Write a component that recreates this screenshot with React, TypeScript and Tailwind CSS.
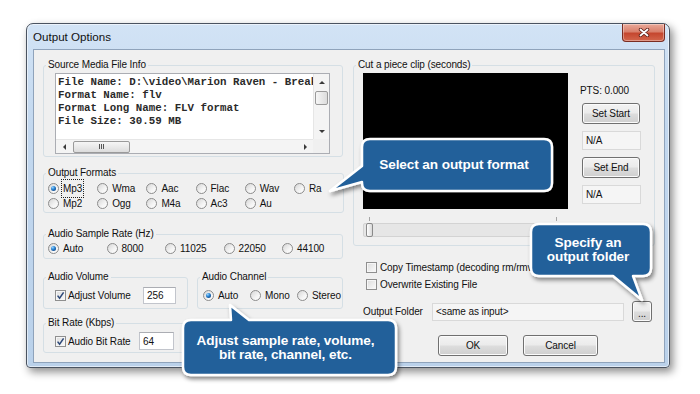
import React from "react";

const FILE_INFO = [
  "File Name: D:\\video\\Marion Raven - Break You.flv",
  "Format Name: flv",
  "Format Long Name: FLV format",
  "File Size: 30.59 MB",
];

const FORMATS = ["Mp3", "Wma", "Aac", "Flac", "Wav", "Ra", "Mp2", "Ogg", "M4a", "Ac3", "Au"];
const RATES = ["Auto", "8000", "11025", "22050", "44100"];

function Radio({ label, checked, focus }: { label: string; checked?: boolean; focus?: boolean }) {
  return (
    <div className="flex items-center gap-[4px] whitespace-nowrap">
      <span className="flex h-[11px] w-[11px] shrink-0 items-center justify-center rounded-full border border-[#8c8c8c] bg-[linear-gradient(135deg,#d6d6d6,#f4f4f4_60%,#ffffff)]">
        {checked && (
          <span className="h-[5px] w-[5px] rounded-full bg-[radial-gradient(circle_at_35%_30%,#9ad6ff_0%,#2b86d6_40%,#0d3f7d_85%)]" />
        )}
      </span>
      <span className={focus ? "outline-1 outline-offset-1 outline-dotted outline-[#222]" : ""}>{label}</span>
    </div>
  );
}

function CheckBox({ checked }: { checked?: boolean }) {
  return (
    <span className="flex h-[11px] w-[11px] shrink-0 items-center justify-center border border-[#8f8f8f] bg-[linear-gradient(135deg,#dcdcdc,#fbfbfb)] shadow-[inset_0_0_0_1px_#f6f6f6]">
      {checked && (
        <svg width="9" height="9" viewBox="0 0 9 9">
          <path d="M1.6 4.6 L3.6 7.2 L7.6 1.4" fill="none" stroke="#2c4778" strokeWidth="1.5" />
        </svg>
      )}
    </span>
  );
}

function Group({ title, className, children }: { title: string; className?: string; children: React.ReactNode }) {
  return (
    <fieldset className={`rounded-[3px] border border-[#d5dfe5] pl-[2px] ${className ?? ""}`}>
      <legend className="px-[2px] leading-[12px]">{title}</legend>
      {children}
    </fieldset>
  );
}

function WinButton({ className, children }: { className: string; children: React.ReactNode }) {
  return (
    <button
      type="button"
      className={`flex items-center justify-center rounded-[3px] border border-[#707070] bg-[linear-gradient(180deg,#f3f3f3_0%,#ebebeb_48%,#dddddd_52%,#cfcfcf_100%)] shadow-[inset_0_0_0_1px_#fbfbfb] ${className}`}
    >
      {children}
    </button>
  );
}

function Tri({ dir }: { dir: "up" | "down" | "left" | "right" }) {
  const vertical = dir === "up" || dir === "down";
  const pts = { up: "0,3 3,0 6,3", down: "0,0 3,3 6,0", left: "3,0 0,3 3,6", right: "0,0 3,3 0,6" }[dir];
  return (
    <svg width={vertical ? 6 : 3} height={vertical ? 3 : 6} viewBox={vertical ? "0 0 6 3" : "0 0 3 6"}>
      <polygon points={pts} fill="#3a3a3a" />
    </svg>
  );
}

function ReadBox({ className, children }: { className: string; children?: React.ReactNode }) {
  return (
    <div className={`flex items-center border border-[#d9d9d9] bg-[#f5f5f5] pl-[3px] ${className}`}>{children}</div>
  );
}

function Callouts() {
  return (
    <>
      <svg className="pointer-events-none absolute left-0 top-0" width="700" height="394" viewBox="0 0 700 394">
        <defs>
          <filter id="sh" x="-20%" y="-20%" width="140%" height="150%">
            <feDropShadow dx="2" dy="3" stdDeviation="2" floodColor="#000" floodOpacity="0.45" />
          </filter>
        </defs>
        <g fill="#23609a" stroke="#ffffff" strokeWidth="2.5" strokeLinejoin="round" filter="url(#sh)">
          <path d="M370,139 H544 Q552,139 552,147 V183 Q552,191 544,191 H370 Q362,191 362,183 V182 L330,191 L362,166 V147 Q362,139 370,139 Z" />
          <path d="M539,224 H643 Q651,224 651,232 V268 Q651,276 643,276 H633 L642,300 L613,276 H539 Q531,276 531,268 V232 Q531,224 539,224 Z" />
          <path d="M191,320 H231 L230,305 L249,320 H388 Q396,320 396,328 V367 Q396,375 388,375 H191 Q183,375 183,367 V328 Q183,320 191,320 Z" />
        </g>
      </svg>
      <div className="absolute left-[361px] top-[138px] flex h-[54px] w-[192px] items-center justify-center pr-[6px] text-[13.6px] font-bold text-white">
        Select an output format
      </div>
      <div className="absolute left-[530px] top-[223px] flex h-[54px] w-[122px] flex-col items-center justify-center pr-[6px] text-[13.6px] font-bold leading-[14px] text-white">
        <span>Specify an</span>
        <span>output folder</span>
      </div>
      <div className="absolute left-[182px] top-[319px] flex h-[57px] w-[215px] flex-col items-center justify-center pr-[8px] text-[13.6px] font-bold leading-[14px] text-white">
        <span>Adjust sample rate, volume,</span>
        <span>bit rate, channel, etc.</span>
      </div>
    </>
  );
}

export default function App() {
  return (
    <div className="relative h-[394px] w-[700px] overflow-hidden bg-white pl-[26px] pt-[23px] font-['Liberation_Sans',Arial,sans-serif] text-[10px] tracking-[-0.1px] text-[#111]">
      <div className="flex h-[345px] w-[644px] flex-col rounded-t-[7px] rounded-b-[4px] border border-[#4a5360] bg-[linear-gradient(180deg,#d2e3f5_0%,#c3d8ef_30%,#bad1ea_100%)] shadow-[inset_0_0_0_1px_rgba(255,255,255,0.55),3px_4px_9px_rgba(0,0,0,0.45)]">
        {/* title bar */}
        <div className="flex h-[25px] shrink-0 items-start justify-between pl-[6px] pr-[4px]">
          <span className="mt-[7px] text-[11.6px] leading-[12px] tracking-normal">Output Options</span>
          <div className="flex h-[18px] w-[43px] items-center justify-center rounded-b-[4px] border border-t-0 border-[#7a2d22] bg-[linear-gradient(180deg,#eaa999_0%,#d9806c_45%,#c5472f_55%,#d3664c_100%)] shadow-[inset_0_0_0_1px_rgba(255,255,255,0.35)]">
            <svg width="12" height="9" viewBox="0 0 12 9">
              <path d="M2.5 1.5 L9.5 7.5 M9.5 1.5 L2.5 7.5" stroke="#5a1d15" strokeWidth="3.4" strokeLinecap="round" />
              <path d="M2.5 1.5 L9.5 7.5 M9.5 1.5 L2.5 7.5" stroke="#ffffff" strokeWidth="1.8" strokeLinecap="round" />
            </svg>
          </div>
        </div>

        {/* client area */}
        <div className="mb-[4px] ml-[6px] mr-[4px] flex flex-1 gap-[10px] border border-[#8fa3bb] bg-[#f0f0f0] px-[9px] pt-[9px]">
          {/* left column */}
          <div className="flex w-[300px] flex-col">
            <Group title="Source Media File Info" className="w-[300px]">
              <div className="pb-[2px] pl-[9px] pt-[2px]">
                <div className="grid h-[81px] w-[275px] grid-cols-[1fr_16px] grid-rows-[1fr_14px] border border-[#abadb3] bg-white">
                  <div className="overflow-hidden whitespace-nowrap pl-[2px] pt-[2px] font-['Liberation_Mono','Courier_New',monospace] text-[10.8px] font-bold leading-[13px] tracking-normal text-[#2a2a2a]">
                    {FILE_INFO.map((l) => (
                      <div key={l}>{l}</div>
                    ))}
                  </div>
                  <div className="flex flex-col items-center border-l border-[#e6e6e6] bg-[#f4f4f4]">
                    <div className="flex h-[16px] items-center justify-center">
                      <Tri dir="up" />
                    </div>
                    <div className="mt-[1px] h-[14px] w-[13px] rounded-[2px] border border-[#9a9a9a] bg-[linear-gradient(90deg,#f6f6f6,#dcdcdc)]" />
                    <div className="flex-1" />
                    <div className="flex h-[16px] items-center justify-center">
                      <Tri dir="down" />
                    </div>
                  </div>
                  <div className="flex items-center border-t border-[#e6e6e6] bg-[#f4f4f4]">
                    <div className="flex w-[16px] justify-center">
                      <Tri dir="left" />
                    </div>
                    <div className="ml-[1px] flex h-[12px] w-[57px] items-center justify-center gap-[1px] rounded-[2px] border border-[#9a9a9a] bg-[linear-gradient(180deg,#f6f6f6,#dcdcdc)]">
                      <span className="h-[5px] w-px bg-[#555]" />
                      <span className="h-[5px] w-px bg-[#555]" />
                      <span className="h-[5px] w-px bg-[#555]" />
                    </div>
                    <div className="flex-1" />
                    <div className="flex w-[16px] justify-center">
                      <Tri dir="right" />
                    </div>
                  </div>
                  <div className="bg-[#f0f0f0]" />
                </div>
              </div>
            </Group>

            <Group title="Output Formats" className="mt-[10px] w-[300px]">
              <div className="grid auto-rows-[15px] grid-cols-[repeat(6,49.2px)] pb-[1px] pl-[2px] pt-[2px]">
                {FORMATS.map((f, i) => (
                  <Radio key={f} label={f} checked={i === 0} focus={i === 0} />
                ))}
              </div>
            </Group>

            <Group title="Audio Sample Rate (Hz)" className="mt-[15px] w-[300px]">
              <div className="grid h-[14px] grid-cols-[repeat(5,58.5px)] pb-[3px] pl-[2px] pt-[1px] [box-sizing:content-box]">
                {RATES.map((r, i) => (
                  <Radio key={r} label={r} checked={i === 0} />
                ))}
              </div>
            </Group>

            <div className="mt-[12px] flex gap-[9px]">
              <Group title="Audio Volume" className="w-[145px]">
                <div className="flex h-[17px] items-center pb-[4px] pl-[9px] pt-[4px] [box-sizing:content-box]">
                  <CheckBox checked />
                  <span className="ml-[2px] w-[75px]">Adjust Volume</span>
                  <div className="flex h-[17px] w-[33px] items-center border border-[#c2c5cc] border-t-[#abadb3] bg-white pl-[3px]">256</div>
                </div>
              </Group>
              <Group title="Audio Channel" className="w-[146px]">
                <div className="flex h-[17px] items-center pb-[4px] pl-[3px] pt-[4px] [box-sizing:content-box]">
                  <div className="w-[47px]">
                    <Radio label="Auto" checked />
                  </div>
                  <div className="w-[47px]">
                    <Radio label="Mono" />
                  </div>
                  <Radio label="Stereo" />
                </div>
              </Group>
            </div>

            <Group title="Bit Rate (Kbps)" className="mt-[8px] w-[145px]">
              <div className="flex h-[18px] items-center pb-[2px] pl-[9px] pt-[3px] [box-sizing:content-box]">
                <CheckBox checked />
                <span className="ml-[2px] w-[71px]">Audio Bit Rate</span>
                <div className="flex h-[18px] w-[35px] items-center border border-[#c2c5cc] border-t-[#abadb3] bg-white pl-[3px]">64</div>
              </div>
            </Group>
          </div>

          {/* right column */}
          <div className="flex w-[302px] flex-col">
            <Group title="Cut a piece clip (seconds)" className="w-[302px]">
              <div className="pb-[8px] pl-[7px] pt-[2px]">
                <div className="flex">
                  <div className="h-[136px] w-[205px] bg-black" />
                  <div className="ml-[12px] flex w-[62px] flex-col">
                    <span className="mt-[12px] leading-[12px]">PTS: 0.000</span>
                    <WinButton className="ml-[2px] mt-[6px] h-[21px] w-[58px]">Set Start</WinButton>
                    <ReadBox className="ml-[2px] mt-[7px] h-[19px] w-[59px]">N/A</ReadBox>
                    <WinButton className="ml-[2px] mt-[7px] h-[21px] w-[58px]">Set End</WinButton>
                    <ReadBox className="ml-[2px] mt-[7px] h-[19px] w-[59px]">N/A</ReadBox>
                  </div>
                </div>
                <div className="mt-[8px] flex h-[4px] w-[205px] justify-between pl-[6px] pr-[11px]">
                  <span className="h-[4px] w-px bg-[#a5a5a5]" />
                  <span className="h-[4px] w-px bg-[#a5a5a5]" />
                </div>
                <div className="mt-[2px] flex h-[14px] w-[205px] items-center rounded-[2px] border border-[#d3d3d3] bg-[#e6e6e6] pl-[2px]">
                  <div className="h-[14px] w-[7px] rounded-[2px] border border-[#8a8a8a] bg-[linear-gradient(90deg,#ffffff,#d9d9d9)]" />
                </div>
              </div>
            </Group>

            <div className="ml-[13px] mt-[15px] flex h-[12px] items-center gap-[3px] whitespace-nowrap">
              <CheckBox />
              <span>Copy Timestamp (decoding rm/rmvb)</span>
            </div>
            <div className="ml-[13px] mt-[5px] flex h-[12px] items-center gap-[3px]">
              <CheckBox />
              <span>Overwrite Existing File</span>
            </div>

            <div className="ml-[10px] mt-[11px] flex h-[21px] items-center">
              <span className="w-[69px]">Output Folder</span>
              <ReadBox className="h-[18px] w-[192px]">&lt;same as input&gt;</ReadBox>
              <WinButton className="ml-[8px] h-[21px] w-[20px] items-end pb-[3px] leading-[8px]">...</WinButton>
            </div>

            <div className="ml-[85px] mt-[13px] flex gap-[15px]">
              <WinButton className="h-[21px] w-[70px]">OK</WinButton>
              <WinButton className="h-[21px] w-[75px]">Cancel</WinButton>
            </div>
          </div>
        </div>
      </div>

      <Callouts />
    </div>
  );
}
